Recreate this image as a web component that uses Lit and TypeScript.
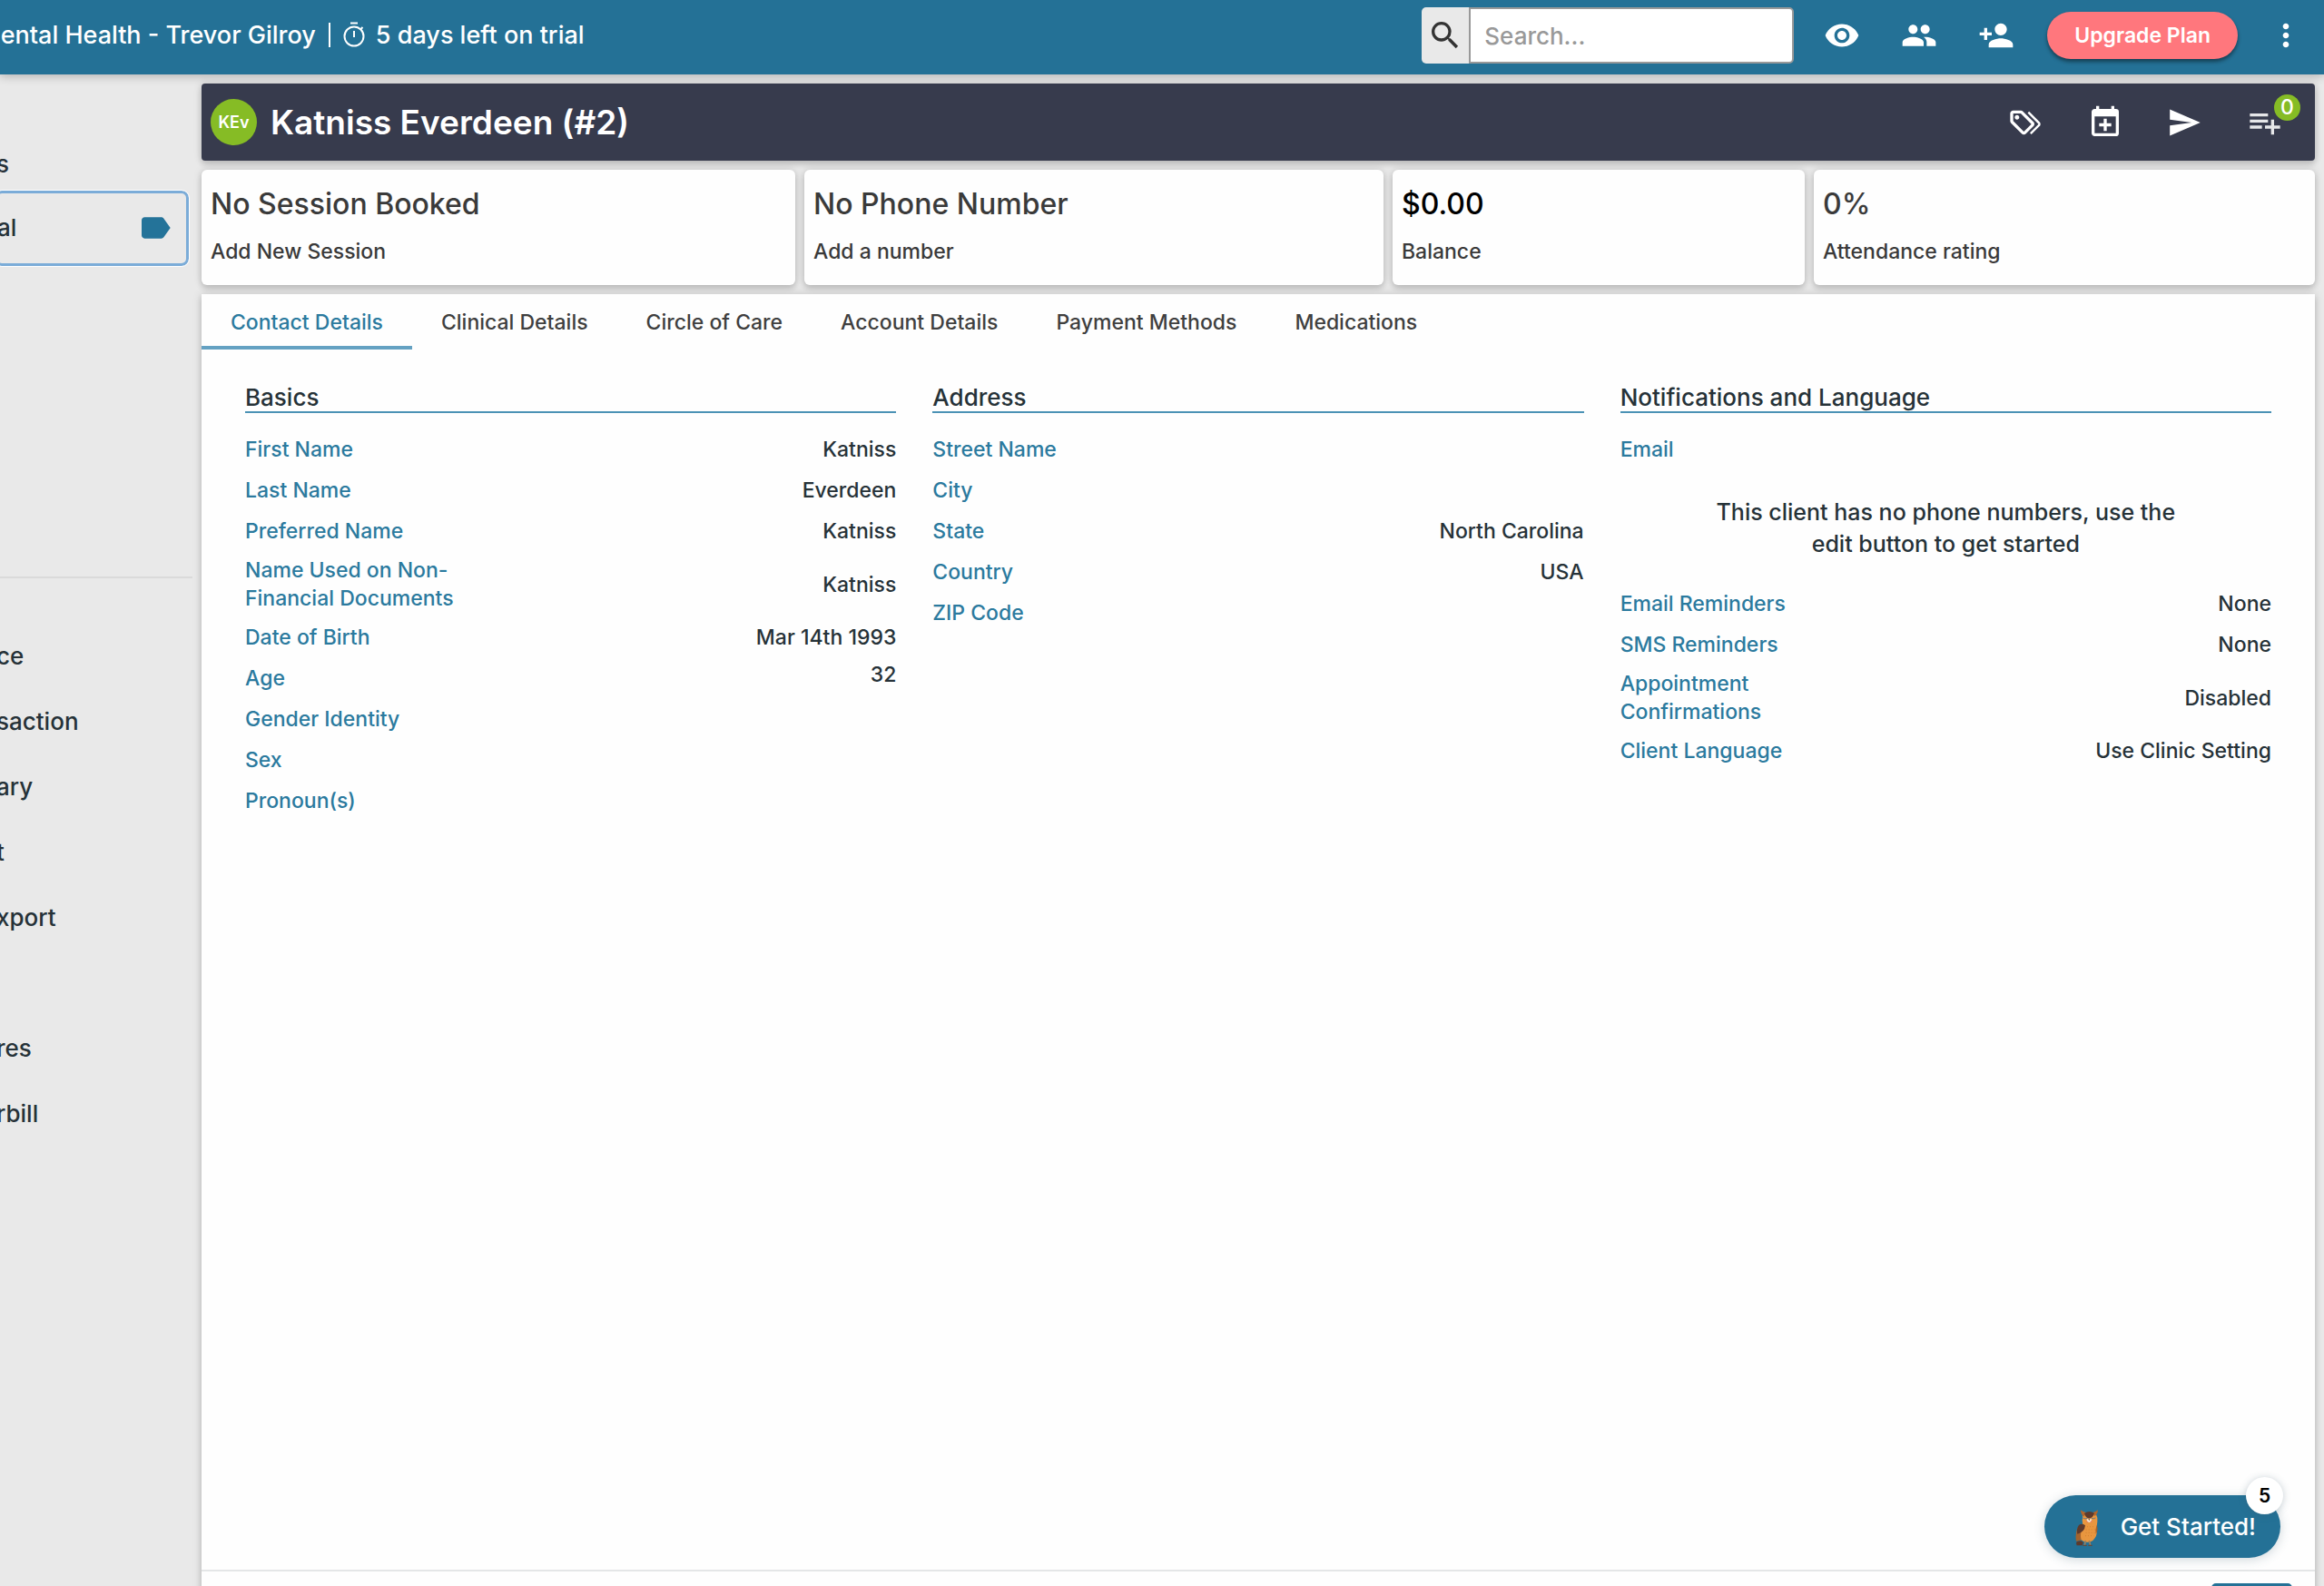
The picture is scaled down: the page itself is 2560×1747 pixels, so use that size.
import { LitElement, html, css, svg, nothing } from 'lit';
import { customElement, property, state } from 'lit/decorators.js';
import { classMap } from 'lit/directives/class-map.js';

interface Field {
  label: string;
  value?: string;
  raised?: boolean;
}

const icon = (path: string, box = '0 0 24 24') =>
  html`<svg class="icon" viewBox=${box} aria-hidden="true">${svg`<path d=${path}></path>`}</svg>`;

const ICONS = {
  search:
    'M15.5 14h-.79l-.28-.27A6.471 6.471 0 0 0 16 9.5 6.5 6.5 0 1 0 9.5 16c1.61 0 3.09-.59 4.23-1.57l.27.28v.79l5 4.99L20.49 19l-4.99-5zm-6 0C7.01 14 5 11.99 5 9.5S7.01 5 9.5 5 14 7.01 14 9.5 11.99 14 9.5 14z',
  eye: 'M12 4.5C7 4.5 2.73 7.61 1 12c1.73 4.39 6 7.5 11 7.5s9.27-3.11 11-7.5c-1.73-4.39-6-7.5-11-7.5zM12 17c-2.76 0-5-2.24-5-5s2.24-5 5-5 5 2.24 5 5-2.24 5-5 5zm0-8c-1.66 0-3 1.34-3 3s1.34 3 3 3 3-1.34 3-3-1.34-3-3-3z',
  people:
    'M16 11c1.66 0 2.99-1.34 2.99-3S17.66 5 16 5s-3 1.34-3 3 1.34 3 3 3zm-8 0c1.66 0 2.99-1.34 2.99-3S9.66 5 8 5 5 6.34 5 8s1.34 3 3 3zm0 2c-2.33 0-7 1.17-7 3.5V19h14v-2.5c0-2.33-4.67-3.5-7-3.5zm8 0c-.29 0-.62.02-.97.05 1.16.84 1.97 1.97 1.97 3.45V19h6v-2.5c0-2.33-4.67-3.5-7-3.5z',
  addPerson:
    'M15 12c2.21 0 4-1.79 4-4s-1.79-4-4-4-4 1.79-4 4 1.79 4 4 4zm-9-2V7H4v3H1v2h3v3h2v-3h3v-2H6zm9 4c-2.67 0-8 1.34-8 4v2h16v-2c0-2.66-5.33-4-8-4z',
  more: 'M12 8c1.1 0 2-.9 2-2s-.9-2-2-2-2 .9-2 2 .9 2 2 2zm0 2c-1.1 0-2 .9-2 2s.9 2 2 2 2-.9 2-2-.9-2-2-2zm0 6c-1.1 0-2 .9-2 2s.9 2 2 2 2-.9 2-2-.9-2-2-2z',
  tags: 'M6.5 10C7.3 10 8 9.3 8 8.5S7.3 7 6.5 7 5 7.7 5 8.5 5.7 10 6.5 10M9 6L16 13L11 18L4 11V6H9M9 4H4C2.9 4 2 4.9 2 6V11C2 11.6 2.2 12.1 2.6 12.4L9.6 19.4C9.9 19.8 10.4 20 11 20S12.1 19.8 12.4 19.4L17.4 14.4C17.8 14 18 13.5 18 13C18 12.4 17.8 11.9 17.4 11.6L10.4 4.6C10.1 4.2 9.6 4 9 4M13.5 5.7L14.5 4.7L21.4 11.6C21.8 12 22 12.5 22 13S21.8 14.1 21.4 14.4L16 19.8L15 18.8L20.7 13L13.5 5.7Z',
  calendar:
    'M19 19V8H5v11h14M16 1h2v2h1a2 2 0 0 1 2 2v14a2 2 0 0 1-2 2H5c-1.11 0-2-.9-2-2V5c0-1.11.89-2 2-2h1V1h2v2h8V1M11 9.5h2v3h3v2h-3v3h-2v-3H8v-2h3v-3z',
  send: 'M2 21L23 12L2 3V10L17 12L2 14V21Z',
  listAdd:
    'M14 10H2v2h12v-2zm0-4H2v2h12V6zm4 8v-4h-2v4h-4v2h4v4h2v-4h4v-2h-4zM2 16h8v-2H2v2z',
  label:
    'M17.63 5.84C17.27 5.33 16.67 5 16 5L5 5.01C3.9 5.01 3 5.9 3 7v10c0 1.1.9 1.99 2 1.99L16 19c.67 0 1.27-.33 1.63-.84L22 12l-4.37-6.16z',
};

@customElement('top-bar')
class TopBar extends LitElement {
  static styles = css`
    :host {
      display: block;
      position: relative;
      z-index: 2;
    }
    .bar {
      display: flex;
      align-items: center;
      box-sizing: border-box;
      height: 82px;
      padding: 0 22px 4px 0;
      background: #247196;
      color: #fff;
      font-size: 27px;
      box-shadow: 0 2px 10px rgba(0, 0, 0, 0.24);
    }
    .practice {
      display: flex;
      flex: 1;
      align-items: center;
      white-space: nowrap;
      margin-left: -24px;
      padding-bottom: 2px;
    }
    .rule {
      width: 2px;
      height: 27px;
      margin: 0 13px 0 14px;
      background: #fff;
    }
    .watch {
      width: 26px;
      height: 28px;
      margin-right: 11px;
    }
    .icon {
      display: block;
      width: 40px;
      height: 40px;
      fill: currentColor;
    }
    button {
      margin: 0;
      padding: 0;
      border: 0;
      background: none;
      color: inherit;
      font: inherit;
      cursor: pointer;
    }
    .search {
      display: flex;
      width: 410px;
      height: 62px;
      margin-right: 33px;
    }
    .search button {
      flex: 0 0 52px;
      display: grid;
      place-items: center;
      background: #e9e9e9;
      color: #333;
      border-radius: 5px 0 0 5px;
    }
    .search input {
      flex: 1;
      min-width: 0;
      box-sizing: border-box;
      padding: 0 15px;
      border: 2px solid #999;
      border-radius: 0 5px 5px 0;
      background: #fff;
      font: inherit;
      font-size: 26px;
      color: #333;
    }
    .search input::placeholder {
      color: #999;
      opacity: 1;
    }
    .actions {
      display: flex;
      align-items: center;
      gap: 45px;
    }
    .upgrade {
      height: 52px;
      margin: 0 33px 0 36px;
      padding: 0 30px;
      border-radius: 26px;
      background: #ff777d;
      font-size: 23px;
      font-weight: 600;
      box-shadow: 0 3px 4px rgba(0, 0, 0, 0.45);
    }
  `;

  render() {
    return html`
      <header class="bar">
        <div class="practice">
          <span>Mental Health - Trevor Gilroy</span>
          <span class="rule"></span>
          <svg class="watch" viewBox="0 0 26 28" fill="none" stroke="#fff" stroke-width="2" aria-hidden="true">
            <circle cx="13" cy="16" r="10.5"></circle>
            <path d="M9 1.5h8M13 10v7M20.5 8l2-2"></path>
          </svg>
          <span>5 days left on trial</span>
        </div>
        <form class="search" @submit=${(e: Event) => e.preventDefault()}>
          <button type="submit" aria-label="Search">${icon(ICONS.search)}</button>
          <input type="text" placeholder="Search..." aria-label="Search" />
        </form>
        <div class="actions">
          <button aria-label="View">${icon(ICONS.eye)}</button>
          <button aria-label="Clients">${icon(ICONS.people)}</button>
          <button aria-label="Add client">${icon(ICONS.addPerson)}</button>
        </div>
        <button class="upgrade">Upgrade Plan</button>
        <button aria-label="More">${icon(ICONS.more)}</button>
      </header>
    `;
  }
}

@customElement('side-nav')
class SideNav extends LitElement {
  static styles = css`
    :host {
      display: block;
      overflow: hidden;
      padding-top: 68px;
      color: #263238;
      font-size: 26px;
    }
    ul {
      list-style: none;
      margin: 0;
      padding: 0;
    }
    .link {
      display: flex;
      align-items: center;
      box-sizing: border-box;
      height: 72px;
      margin-left: -4px;
      color: inherit;
      text-decoration: none;
    }
    .top .link {
      height: 60px;
    }
    .top .link.selected {
      justify-content: space-between;
      height: 83px;
      margin: 0 14px 0 -6px;
      padding: 0 14px 2px 0;
      border: 3px solid #7bacd8;
      border-radius: 8px;
      outline: 1px solid #fff;
      outline-offset: 0;
    }
    .icon {
      width: 40px;
      height: 40px;
      fill: #247399;
    }
    .more {
      margin: 342px 10px 0 0;
      padding-top: 49px;
      border-top: 2px solid #dadada;
    }
    .blank {
      height: 72px;
    }
  `;

  render() {
    const reports = ['ce', 'saction', 'ary', 't', 'xport', '', 'res', 'rbill'];
    return html`
      <nav>
        <ul class="top">
          <li><a class="link" href="#s">s</a></li>
          <li><a class="link selected" href="#al"><span>al</span>${icon(ICONS.label)}</a></li>
        </ul>
        <ul class="more">
          ${reports.map((name) =>
            name
              ? html`<li><a class="link" href="#${name}">${name}</a></li>`
              : html`<li class="blank"></li>`
          )}
        </ul>
      </nav>
    `;
  }
}

@customElement('client-heading')
class ClientHeading extends LitElement {
  static styles = css`
    .bar {
      display: flex;
      align-items: center;
      height: 85px;
      padding: 0 35px 0 10px;
      border-radius: 4px;
      background: #373b4d;
      color: #fff;
      box-shadow: 0 4px 6px rgba(0, 0, 0, 0.14), 0 0 10px rgba(0, 0, 0, 0.14);
    }
    .avatar {
      display: grid;
      place-items: center;
      width: 51px;
      height: 51px;
      border-radius: 50%;
      background: #86bc25;
      font-size: 18px;
      font-weight: 600;
    }
    h1 {
      flex: 1;
      margin: 0 0 0 15px;
      font-size: 37px;
      font-weight: 600;
    }
    .actions {
      display: flex;
      gap: 48px;
    }
    button {
      position: relative;
      padding: 0;
      border: 0;
      background: none;
      color: #fff;
      font: inherit;
      cursor: pointer;
    }
    .icon {
      display: block;
      width: 40px;
      height: 40px;
      fill: currentColor;
    }
    .queue .icon {
      opacity: 0.88;
    }
    .badge {
      position: absolute;
      top: -11px;
      right: -19px;
      width: 29px;
      height: 29px;
      border-radius: 50%;
      background: #86bc25;
      font-size: 23px;
      line-height: 29px;
      text-align: center;
    }
  `;

  render() {
    return html`
      <div class="bar">
        <span class="avatar">KEv</span>
        <h1>Katniss Everdeen (#2)</h1>
        <div class="actions">
          <button aria-label="Tags">${icon(ICONS.tags)}</button>
          <button aria-label="New appointment">${icon(ICONS.calendar)}</button>
          <button aria-label="Send">${icon(ICONS.send, '0 -0.5 25 25')}</button>
          <button class="queue" aria-label="Add to list">
            ${icon(ICONS.listAdd)}<span class="badge">0</span>
          </button>
        </div>
      </div>
    `;
  }
}

@customElement('field-section')
class FieldSection extends LitElement {
  @property() heading = '';
  @property({ attribute: false }) fields: Field[] = [];
  @property({ attribute: false }) trailing: Field[] = [];
  @property() notice = '';

  static styles = css`
    :host {
      display: block;
      min-width: 0;
      font-size: 23px;
      line-height: 31px;
      color: #263238;
    }
    h2 {
      margin: 0 0 23px;
      border-bottom: 2px solid #4b92b5;
      font-size: 26px;
      font-weight: 500;
      line-height: 30px;
    }
    dl {
      margin: 0;
    }
    .row {
      display: flex;
      align-items: center;
      justify-content: space-between;
      min-height: 35px;
      padding-bottom: 10px;
    }
    dt {
      width: 33%;
      color: #2b7a9e;
    }
    dd {
      margin: 0;
      text-align: right;
    }
    .raised {
      align-self: flex-start;
      line-height: 26px;
    }
    p {
      margin: 24px 0 31px;
      padding: 0 96px;
      font-size: 25px;
      line-height: 35px;
      text-align: center;
    }
  `;

  private list(fields: Field[]) {
    return html`<dl>
      ${fields.map(
        (f) => html`<div class="row">
          <dt>${f.label}</dt>
          <dd class=${classMap({ raised: !!f.raised })}>${f.value ?? nothing}</dd>
        </div>`
      )}
    </dl>`;
  }

  render() {
    return html`
      <section>
        <h2>${this.heading}</h2>
        ${this.list(this.fields)}
        ${this.notice ? html`<p>${this.notice}</p>` : nothing}
        ${this.trailing.length ? this.list(this.trailing) : nothing}
      </section>
    `;
  }
}

@customElement('client-panel')
class ClientPanel extends LitElement {
  @state() private active = 0;

  static styles = css`
    :host {
      display: flex;
      flex-direction: column;
      background: #fefefe;
      box-shadow: 0 4px 6px rgba(0, 0, 0, 0.14), 0 0 10px rgba(0, 0, 0, 0.14);
    }
    .tabs {
      display: flex;
      height: 61px;
    }
    .tab {
      padding: 5px 32px 0;
      border: 0;
      border-bottom: 4px solid transparent;
      background: none;
      color: #3f3f3f;
      font: inherit;
      font-size: 23px;
      cursor: pointer;
    }
    .tab.active {
      border-bottom-color: #64a1c2;
      color: #2b7a9e;
    }
    .sections {
      flex: 1;
      display: grid;
      grid-template-columns: repeat(3, minmax(0, 1fr));
      align-content: start;
      gap: 40px;
      padding: 38px 48px;
    }
    .footer {
      display: flex;
      justify-content: flex-end;
      height: 63px;
      padding: 13px 25px 0 0;
      border-top: 2px solid #e4e6e7;
    }
    .edit {
      width: 89px;
      height: 50px;
      border: 0;
      border-radius: 5px;
      background: #247196;
    }
  `;

  render() {
    const tabs = [
      'Contact Details',
      'Clinical Details',
      'Circle of Care',
      'Account Details',
      'Payment Methods',
      'Medications',
    ];
    const basics: Field[] = [
      { label: 'First Name', value: 'Katniss' },
      { label: 'Last Name', value: 'Everdeen' },
      { label: 'Preferred Name', value: 'Katniss' },
      { label: 'Name Used on Non-Financial Documents', value: 'Katniss' },
      { label: 'Date of Birth', value: 'Mar 14th 1993' },
      { label: 'Age', value: '32', raised: true },
      { label: 'Gender Identity' },
      { label: 'Sex' },
      { label: 'Pronoun(s)' },
    ];
    const address: Field[] = [
      { label: 'Street Name' },
      { label: 'City' },
      { label: 'State', value: 'North Carolina' },
      { label: 'Country', value: 'USA' },
      { label: 'ZIP Code' },
    ];
    const reminders: Field[] = [
      { label: 'Email Reminders', value: 'None' },
      { label: 'SMS Reminders', value: 'None' },
      { label: 'Appointment Confirmations', value: 'Disabled' },
      { label: 'Client Language', value: 'Use Clinic Setting' },
    ];
    return html`
      <div class="tabs" role="tablist">
        ${tabs.map(
          (name, i) => html`<button
            role="tab"
            aria-selected=${i === this.active}
            class=${classMap({ tab: true, active: i === this.active })}
            @click=${() => (this.active = i)}
          >${name}</button>`
        )}
      </div>
      <div class="sections">
        <field-section heading="Basics" .fields=${basics}></field-section>
        <field-section heading="Address" .fields=${address}></field-section>
        <field-section
          heading="Notifications and Language"
          .fields=${[{ label: 'Email' }]}
          notice="This client has no phone numbers, use the edit button to get started"
          .trailing=${reminders}
        ></field-section>
      </div>
      <div class="footer"><button class="edit" aria-label="Edit"></button></div>
    `;
  }
}

@customElement('get-started')
class GetStarted extends LitElement {
  static styles = css`
    :host {
      position: absolute;
      right: 48px;
      bottom: 31px;
      z-index: 3;
    }
    button {
      display: flex;
      align-items: center;
      gap: 17px;
      height: 69px;
      padding: 0 27px;
      border: 0;
      border-radius: 35px;
      background: #247196;
      color: #fff;
      font: inherit;
      font-size: 26px;
      box-shadow: 0 2px 12px rgba(60, 90, 110, 0.24);
      cursor: pointer;
    }
    .owl {
      width: 40px;
      height: 50px;
    }
    .count {
      position: absolute;
      top: -20px;
      right: -3px;
      width: 41px;
      height: 41px;
      border-radius: 50%;
      background: #fff;
      color: #000;
      font-size: 21px;
      font-weight: 600;
      line-height: 41px;
      text-align: center;
      box-shadow: 0 1px 8px rgba(60, 90, 110, 0.3);
    }
  `;

  render() {
    return html`
      <button>
        <svg class="owl" viewBox="0 0 120 150" aria-hidden="true">
          <path fill="#5e3a2c" d="M26 123l14-2 8 5-4 10H26q-4-6 0-13z"></path>
          <path fill="#a5632c" d="M28 78q-8 22-4 44l18-4 10-34z"></path>
          <path fill="#e8963f" d="M46 34q20-12 44 0 6 10 4 24-3 14-1 26 1 22-14 36-20 12-38-2-6-24 6-44-5-22-1-40z"></path>
          <path fill="#5e3a2c" d="M27 92q-1-20 10-26 12-3 17 4-2 22-26 28z"></path>
          <path fill="#a5632c" d="M92 68q6 18-3 30-3-14 3-30z"></path>
          <path fill="#b3662b" d="M38 19q10 6 18 8l-6 14q-9-5-12-22zM96 19q-9 7-17 8l6 12q9-4 11-20z"></path>
          <path fill="#5e3a2c" d="M51 30q17-12 33 0-4 14-17 17-13-3-16-17z"></path>
          <path fill="none" stroke="#6e7a86" stroke-width="3" d="M46 45q8 5 15 1M75 46q7 3 13-1"></path>
          <path fill="#f3e6da" d="M58 50q9-6 18 0-2 8-9 10-7-2-9-10z"></path>
          <path fill="#e87a74" d="M58 54l6 5-5 1zM73 54l5 3-6 3z"></path>
          <path fill="#8b5a2a" d="M64 48h6l-3 7z"></path>
          <path fill="none" stroke="#c9772a" stroke-width="2" stroke-dasharray="3 6" d="M60 74h26M56 84h32M56 94h30M54 104h28"></path>
          <path fill="none" stroke="#9a8060" stroke-width="5" d="M55 120l-3 15M67 120l4 15"></path>
          <path fill="none" stroke="#5e4a3c" stroke-width="4" d="M46 136h13M64 136h13"></path>
        </svg>
        <span>Get Started!</span>
      </button>
      <span class="count">5</span>
    `;
  }
}

@customElement('app-root')
class AppRoot extends LitElement {
  static styles = css`
    :host {
      display: block;
      position: relative;
      height: 100vh;
      overflow: hidden;
      background: #e9e9e9;
      font-family: Inter, 'Liberation Sans', sans-serif;
      font-weight: 500;
    }
    .page {
      display: grid;
      grid-template-rows: auto 1fr;
      height: calc(100vh + 60px);
    }
    .body {
      display: grid;
      grid-template-columns: 222px minmax(0, 1fr);
      min-height: 0;
    }
    main {
      display: flex;
      flex-direction: column;
      gap: 10px;
      padding: 10px 10px 0 0;
    }
    client-panel {
      flex: 1;
    }
    .cards {
      display: grid;
      grid-template-columns: 654fr 638fr 454fr 552fr;
      gap: 10px;
    }
    .card {
      display: flex;
      flex-direction: column;
      gap: 17px;
      padding: 18px 10px 22px;
      border-radius: 6px;
      background: #fefefe;
      color: #3a3a3a;
      box-shadow: 0 4px 6px rgba(0, 0, 0, 0.14), 0 0 10px rgba(0, 0, 0, 0.14);
    }
    .figure {
      font-size: 32px;
      line-height: 40px;
    }
    .money {
      color: #000;
    }
    .caption {
      font-size: 23px;
      line-height: 30px;
    }
  `;

  render() {
    const cards = [
      { figure: 'No Session Booked', caption: 'Add New Session' },
      { figure: 'No Phone Number', caption: 'Add a number' },
      { figure: '$0.00', caption: 'Balance', money: true },
      { figure: '0%', caption: 'Attendance rating' },
    ];
    return html`
      <div class="page">
        <top-bar></top-bar>
        <div class="body">
          <side-nav></side-nav>
          <main>
            <client-heading></client-heading>
            <div class="cards">
              ${cards.map(
                (c) => html`<div class="card">
                  <span class=${classMap({ figure: true, money: !!c.money })}>${c.figure}</span>
                  <span class="caption">${c.caption}</span>
                </div>`
              )}
            </div>
            <client-panel></client-panel>
          </main>
        </div>
      </div>
      <get-started></get-started>
    `;
  }
}
